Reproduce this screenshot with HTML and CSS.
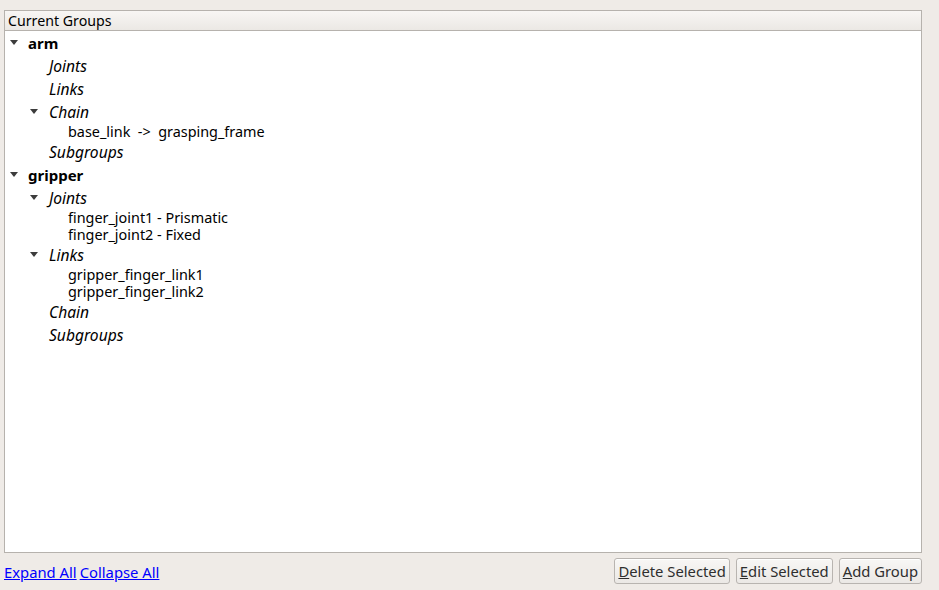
FILE: index.html
```html
<!DOCTYPE html>
<html>
<head>
<meta charset="utf-8">
<link rel="stylesheet" href="styles.css">
</head>
<body>
<div class="app">
  <div class="tree">
    <div class="header">Current Groups</div>
    <div class="body">
      <div class="node">
        <div class="row top"><span class="arrow"></span><span class="label">arm</span></div>
        <div class="children">
          <div class="row cat"><span class="arrow none"></span><span class="label">Joints</span></div>
          <div class="row cat"><span class="arrow none"></span><span class="label">Links</span></div>
          <div class="row cat"><span class="arrow"></span><span class="label">Chain</span></div>
          <div class="children">
            <div class="row leaf"><span class="arrow none"></span><span class="label">base_link&nbsp; -&gt;&nbsp; grasping_frame</span></div>
          </div>
          <div class="row cat"><span class="arrow none"></span><span class="label">Subgroups</span></div>
        </div>
      </div>
      <div class="node">
        <div class="row top"><span class="arrow"></span><span class="label">gripper</span></div>
        <div class="children">
          <div class="row cat"><span class="arrow"></span><span class="label">Joints</span></div>
          <div class="children">
            <div class="row leaf"><span class="arrow none"></span><span class="label">finger_joint1 - Prismatic</span></div>
            <div class="row leaf"><span class="arrow none"></span><span class="label">finger_joint2 - Fixed</span></div>
          </div>
          <div class="row cat"><span class="arrow"></span><span class="label">Links</span></div>
          <div class="children">
            <div class="row leaf"><span class="arrow none"></span><span class="label">gripper_finger_link1</span></div>
            <div class="row leaf"><span class="arrow none"></span><span class="label">gripper_finger_link2</span></div>
          </div>
          <div class="row cat"><span class="arrow none"></span><span class="label">Chain</span></div>
          <div class="row cat"><span class="arrow none"></span><span class="label">Subgroups</span></div>
        </div>
      </div>
    </div>
  </div>
  <div class="footer">
    <div class="links">
      <a href="#" class="link">Expand All</a>
      <a href="#" class="link">Collapse All</a>
    </div>
    <div class="buttons">
      <button class="btn"><u>D</u>elete Selected</button>
      <button class="btn"><u>E</u>dit Selected</button>
      <button class="btn"><u>A</u>dd Group</button>
    </div>
  </div>
</div>
</body>
</html>
```

FILE: styles.css
```css
html, body {
  margin: 0;
  padding: 0;
  background: #efebe7;
}
body {
  font-family: "Noto Sans", "DejaVu Sans", sans-serif;
  font-size: 14px;
  color: #000;
  width: 939px;
  height: 590px;
  overflow: hidden;
}
.app {
  display: flex;
  flex-direction: column;
  padding: 10px 17px 0 4px;
  height: 590px;
  box-sizing: border-box;
}
.tree {
  height: 543px;
  border: 1px solid #b6b2ad;
  background: #fff;
  box-sizing: border-box;
  display: flex;
  flex-direction: column;
}
.header {
  height: 20px;
  line-height: 19px;
  padding-left: 3px;
  background: linear-gradient(#f8f6f4, #ebe8e4);
  border-bottom: 1px solid #b6b2ad;
  box-sizing: border-box;
  font-size: 14.2px;
}
.row {
  display: flex;
  align-items: center;
  white-space: nowrap;
}
.row.top {
  height: 23px;
  line-height: 20px;
  font-weight: bold;
  font-size: 15px;
}
.row.cat {
  height: 23px;
  line-height: 20px;
  font-style: italic;
  font-size: 15.6px;
}
.row.cat .label {
  margin-left: 1px;
}
.row.leaf {
  height: 17px;
  line-height: 17px;
  font-size: 14.4px;
}
.children {
  padding-left: 20px;
}
.arrow {
  width: 23px;
  height: 10px;
  flex: none;
  display: flex;
  align-items: center;
}
.arrow::before {
  content: "";
  margin-left: 5px;
  border-left: 4.5px solid transparent;
  border-right: 4.5px solid transparent;
  border-top: 5px solid #3c3c3c;
}
.arrow.none::before {
  display: none;
}
.footer {
  display: flex;
  justify-content: space-between;
  align-items: center;
  height: 36px;
}
.links {
  display: flex;
  gap: 3px;
  padding-top: 1px;
}
.link {
  color: #0000ff;
  text-decoration: underline;
  font-size: 14.8px;
}
.buttons {
  display: flex;
  gap: 6px;
}
.btn {
  font-family: inherit;
  font-size: 14.8px;
  height: 26px;
  line-height: 20px;
  padding: 0 3px;
  border: 1px solid #b8b4b0;
  border-radius: 3px;
  background: linear-gradient(#f8f7f5, #ebe8e5);
  color: #2e2e2e;
  box-shadow: inset 0 1px 0 #fff;
}
.btn u {
  text-decoration: underline;
}
```
